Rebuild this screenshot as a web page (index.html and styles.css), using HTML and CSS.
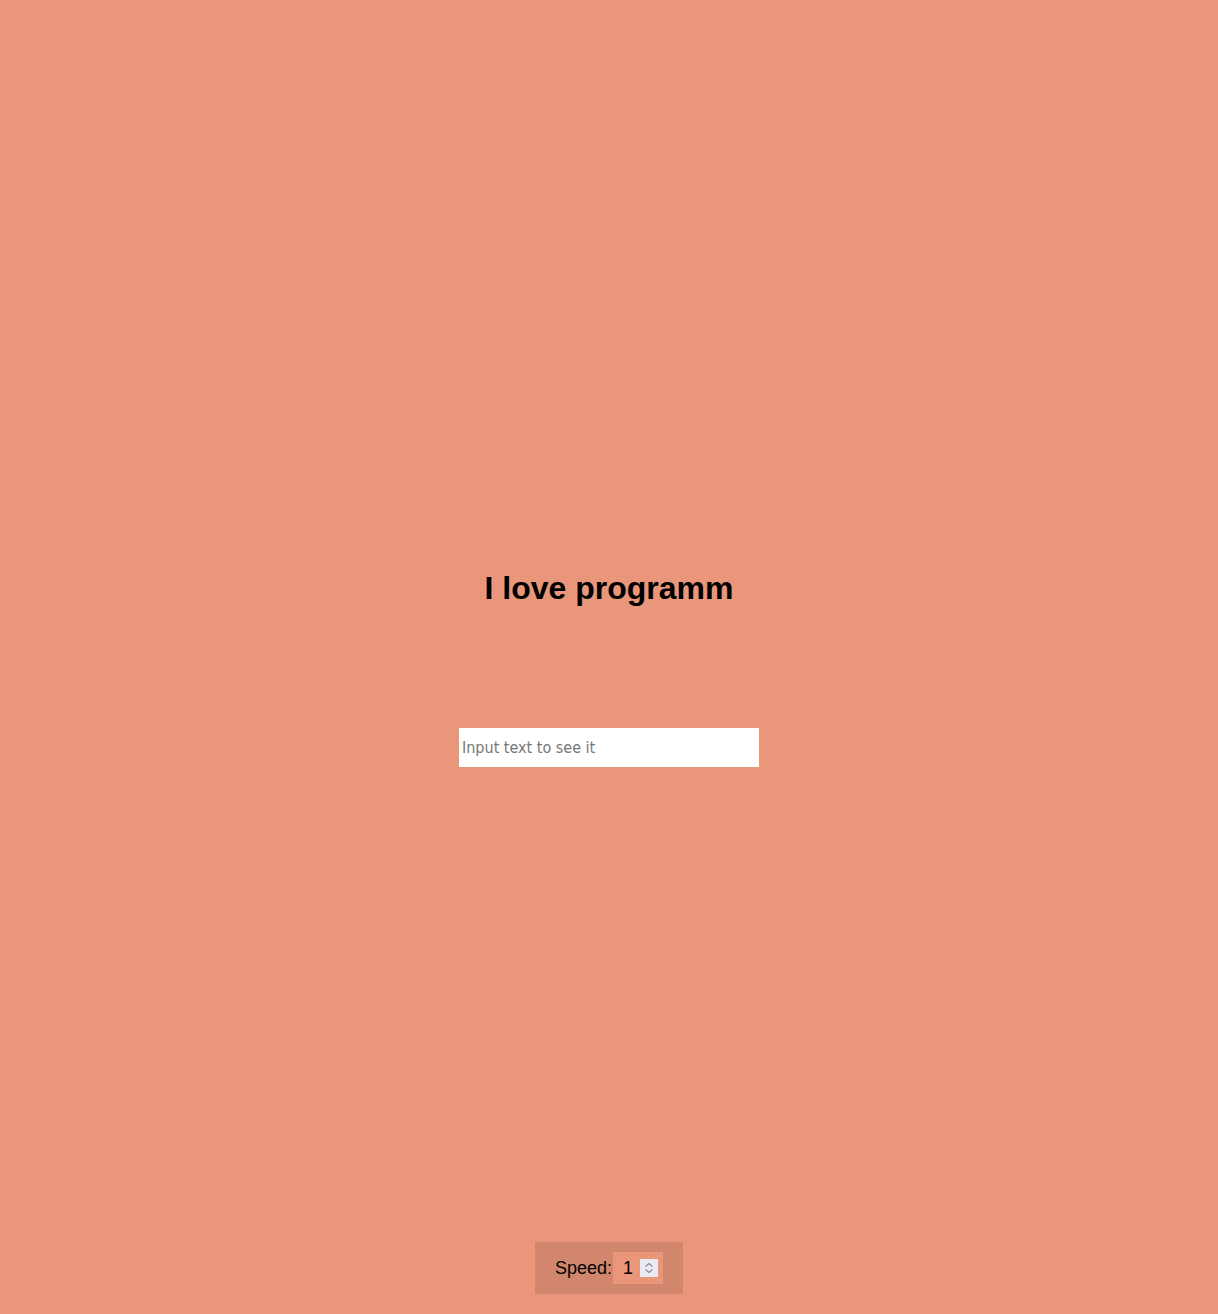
FILE: index.html
```html
<!DOCTYPE html>
<html>
<head>
<meta charset="utf-8">
<link rel="stylesheet" href="styles.css">
</head>
<body>
<div class="page">
  <main class="stage">
    <h1 class="title">I love programm</h1>
    <input class="text-input" type="text" placeholder="Input text to see it">
  </main>
  <footer class="controls">
    <label class="speed-label" for="speed">Speed:</label>
    <div class="speed-field">
      <input id="speed" class="speed-input" type="number" value="1">
      <svg class="spinner" width="18" height="18" viewBox="0 0 18 18" aria-hidden="true">
        <rect x="0" y="0" width="18" height="18" fill="#ebebf2"/>
        <path d="M5.5 7.5 L9 4.5 L12.5 7.5" fill="none" stroke="#8a8a95" stroke-width="1.2"/>
        <path d="M5.5 10.5 L9 13.5 L12.5 10.5" fill="none" stroke="#8a8a95" stroke-width="1.2"/>
      </svg>
    </div>
  </footer>
</div>
</body>
</html>
```
FILE: styles.css
```css
html, body {
  margin: 0;
  padding: 0;
  background: #e9967a;
}
.page {
  min-height: 1314px;
  display: flex;
  flex-direction: column;
  align-items: center;
}
.stage {
  display: flex;
  flex-direction: column;
  align-items: center;
  padding-top: 566px;
}
.title {
  margin: 0;
  font-family: "Liberation Sans", Arial, sans-serif;
  font-weight: bold;
  font-size: 32px;
  line-height: 44px;
  color: #000;
}
.text-input {
  margin-top: 118px;
  width: 300px;
  height: 39px;
  box-sizing: border-box;
  border: none;
  padding: 0 3px;
  background: #fff;
  font-family: "DejaVu Sans Condensed", "DejaVu Sans", Verdana, sans-serif;
  font-size: 16px;
  outline: none;
}
.text-input::placeholder {
  color: #777;
}
.controls {
  margin-top: auto;
  margin-bottom: 20px;
  display: flex;
  align-items: center;
  width: 148px;
  height: 52px;
  box-sizing: border-box;
  padding: 0 20px;
  background: rgba(0, 0, 0, 0.1);
}
.speed-label {
  font-family: "Liberation Sans", Arial, sans-serif;
  font-size: 18px;
  color: #000;
}
.speed-field {
  display: flex;
  align-items: center;
  width: 50px;
  height: 32px;
  margin-left: 1px;
  box-sizing: border-box;
  padding-right: 5px;
  background: #e9967a;
}
.speed-input {
  flex: 1;
  min-width: 0;
  height: 32px;
  box-sizing: border-box;
  border: none;
  padding: 1px 0 0 10px;
  background: transparent;
  font-family: "Liberation Sans", Arial, sans-serif;
  font-size: 18px;
  color: #000;
  outline: none;
  -moz-appearance: textfield;
}
.speed-input::-webkit-inner-spin-button,
.speed-input::-webkit-outer-spin-button {
  -webkit-appearance: none;
  margin: 0;
}
.spinner {
  flex: none;
  display: block;
}
```
